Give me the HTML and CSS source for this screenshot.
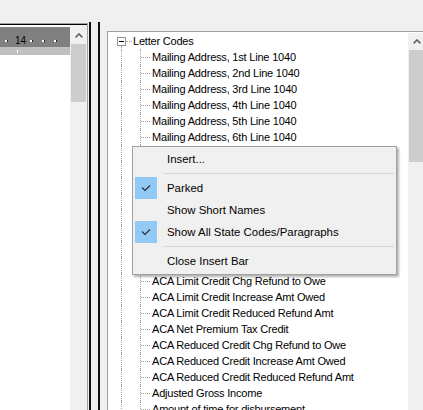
FILE: index.html
```html
<!DOCTYPE html>
<html>
<head>
<meta charset="utf-8">
<title>Letter Codes</title>
<link rel="stylesheet" href="styles.css">
</head>
<body>
<div class="app">
  <section class="left-frame">
    <div class="left-inner">
      <div class="doc">
        <div class="ruler">
          <span class="rdot"></span>
          <span class="ruler-num">14</span>
          <span class="rdot r2"></span>
          <span class="rdot r3"></span>
          <span class="rdot r3"></span>
        </div>
        <div class="ruler-band"><span class="band-tick"></span></div>
        <div class="page"></div>
      </div>
      <div class="vscroll vs-left">
        <div class="sb-btn"><svg width="8" height="5" viewBox="0 0 8 5"><polyline points="0.6,4.4 4,1 7.4,4.4" fill="none" stroke="#606060" stroke-width="1.6"/></svg></div>
        <div class="sb-thumb th-left"></div>
      </div>
    </div>
  </section>

  <div class="splitter"><span class="split-line"></span><span class="split-line"></span></div>

  <section class="right-pane">
    <div class="tree-box">
      <div class="tree">
        <div class="row root-row"><span class="exp"></span><span class="hstub"></span><span class="label root-label">Letter Codes</span></div>
        <div class="row"><span class="g1"></span><span class="g2"><span class="stub"></span></span><span class="label">Mailing Address, 1st Line 1040</span></div>
        <div class="row"><span class="g1"></span><span class="g2"><span class="stub"></span></span><span class="label">Mailing Address, 2nd Line 1040</span></div>
        <div class="row"><span class="g1"></span><span class="g2"><span class="stub"></span></span><span class="label">Mailing Address, 3rd Line 1040</span></div>
        <div class="row"><span class="g1"></span><span class="g2"><span class="stub"></span></span><span class="label">Mailing Address, 4th Line 1040</span></div>
        <div class="row"><span class="g1"></span><span class="g2"><span class="stub"></span></span><span class="label">Mailing Address, 5th Line 1040</span></div>
        <div class="row"><span class="g1"></span><span class="g2"><span class="stub"></span></span><span class="label">Mailing Address, 6th Line 1040</span></div>
        <div class="row"><span class="g1"></span><span class="g2"><span class="stub"></span></span><span class="label"></span></div>
        <div class="row"><span class="g1"></span><span class="g2"><span class="stub"></span></span><span class="label"></span></div>
        <div class="row"><span class="g1"></span><span class="g2"><span class="stub"></span></span><span class="label"></span></div>
        <div class="row"><span class="g1"></span><span class="g2"><span class="stub"></span></span><span class="label"></span></div>
        <div class="row"><span class="g1"></span><span class="g2"><span class="stub"></span></span><span class="label"></span></div>
        <div class="row"><span class="g1"></span><span class="g2"><span class="stub"></span></span><span class="label"></span></div>
        <div class="row"><span class="g1"></span><span class="g2"><span class="stub"></span></span><span class="label"></span></div>
        <div class="row"><span class="g1"></span><span class="g2"><span class="stub"></span></span><span class="label"></span></div>
        <div class="row"><span class="g1"></span><span class="g2"><span class="stub"></span></span><span class="label">ACA Limit Credit Chg Refund to Owe</span></div>
        <div class="row"><span class="g1"></span><span class="g2"><span class="stub"></span></span><span class="label">ACA Limit Credit Increase Amt Owed</span></div>
        <div class="row"><span class="g1"></span><span class="g2"><span class="stub"></span></span><span class="label">ACA Limit Credit Reduced Refund Amt</span></div>
        <div class="row"><span class="g1"></span><span class="g2"><span class="stub"></span></span><span class="label">ACA Net Premium Tax Credit</span></div>
        <div class="row"><span class="g1"></span><span class="g2"><span class="stub"></span></span><span class="label">ACA Reduced Credit Chg Refund to Owe</span></div>
        <div class="row"><span class="g1"></span><span class="g2"><span class="stub"></span></span><span class="label">ACA Reduced Credit Increase Amt Owed</span></div>
        <div class="row"><span class="g1"></span><span class="g2"><span class="stub"></span></span><span class="label">ACA Reduced Credit Reduced Refund Amt</span></div>
        <div class="row"><span class="g1"></span><span class="g2"><span class="stub"></span></span><span class="label">Adjusted Gross Income</span></div>
        <div class="row"><span class="g1"></span><span class="g2"><span class="stub"></span></span><span class="label">Amount of time for disbursement</span></div>
      </div>
      <div class="vscroll vs-right">
        <div class="sb-btn"><svg width="8" height="5" viewBox="0 0 8 5"><polyline points="0.6,4.4 4,1 7.4,4.4" fill="none" stroke="#606060" stroke-width="1.6"/></svg></div>
        <div class="sb-thumb th-right"></div>
      </div>
    </div>
  </section>

  <div class="menu">
    <div class="mi"><span class="check"></span><span class="mtext">Insert...</span></div>
    <div class="msep"></div>
    <div class="mi"><span class="check on"><svg width="22" height="22" viewBox="0 0 22 22"><polyline points="7,10.5 10,13.5 15,8.5" fill="none" stroke="#2b2b2b" stroke-width="1.1"/></svg></span><span class="mtext">Parked</span></div>
    <div class="mi"><span class="check"></span><span class="mtext">Show Short Names</span></div>
    <div class="mi"><span class="check on"><svg width="22" height="22" viewBox="0 0 22 22"><polyline points="7,10.5 10,13.5 15,8.5" fill="none" stroke="#2b2b2b" stroke-width="1.1"/></svg></span><span class="mtext">Show All State Codes/Paragraphs</span></div>
    <div class="msep"></div>
    <div class="mi"><span class="check"></span><span class="mtext">Close Insert Bar</span></div>
  </div>
</div>
</body>
</html>
```

FILE: styles.css
```css
* { box-sizing: border-box; margin: 0; padding: 0; }
html, body { width: 423px; height: 410px; overflow: hidden; }
body { background: #f0f0f0; font-family: "Liberation Sans", Arial, sans-serif; color: #000; }

.app { position: relative; display: flex; height: 410px; }

/* left document pane */
.left-frame { flex: none; width: 88px; margin-top: 23px; border-top: 1px solid #a0a0a0; border-right: 1px solid #a0a0a0; }
.left-inner { display: flex; height: 100%; border-top: 1px solid #000; }
.doc { width: 70px; background: #fff; padding-top: 2px; display: flex; flex-direction: column; }
.ruler { height: 20px; background: #808080; display: flex; align-items: center; padding: 8px 0 0 5px; }
.rdot { width: 2px; height: 2px; background: #fff; box-shadow: 1px 0 0 #202020; flex: none; }
.ruler-num { margin-left: 8px; font-size: 10px; line-height: 12px; color: #000; }
.rdot.r2 { margin-left: 4px; }
.rdot.r3 { margin-left: 10px; }
.ruler-band { height: 8px; background: #c0c0c0; padding: 3px 0 0 17px; }
.band-tick { display: block; width: 1px; height: 3px; background: #fff; }
.page { flex: 1; background: #fff; }

/* scrollbars */
.vscroll { flex: none; width: 17px; background: #f0f0f0; }
.vs-left { padding-top: 2px; }
.sb-btn { height: 17px; display: flex; align-items: center; justify-content: center; }
.sb-btn svg { display: block; }
.sb-thumb { margin: 0 1px; background: #cdcdcd; }
.th-left { height: 58px; }
.th-right { height: 112px; }

/* splitter */
.splitter { flex: none; width: 19px; margin-top: 22px; display: flex; gap: 7px; padding-left: 1px; }
.split-line { width: 2px; background: #111; }

/* right tree pane */
.right-pane { flex: none; width: 319px; padding-top: 31px; }
.tree-box { display: flex; height: 400px; background: #fff; border: 1px solid #a0a0a0; padding: 1px 0 0 1px; }
.tree { width: 299px; flex: none; padding-left: 12px; overflow: hidden; font-size: 11px; letter-spacing: -0.2px; }
.row { display: flex; height: 16px; white-space: nowrap; }
.label { line-height: 16px; }

.root-row { align-items: flex-start; }
.exp { position: relative; flex: none; width: 9px; height: 9px; margin: 4px 0 0 -4px; border: 1px solid #919191; background: #fff; }
.exp::before { content: ""; position: absolute; left: 1px; top: 3px; width: 5px; height: 1px; background: #000; }
.exp::after { content: ""; position: absolute; left: 3px; top: 8px; height: 4px; border-left: 1px dotted #a0a0a0; }
.hstub { flex: none; width: 6px; margin-top: 8px; border-top: 1px dotted #a0a0a0; }
.root-label { margin-left: 1px; }

.g1 { flex: none; width: 19px; border-left: 1px dotted #a0a0a0; }
.g2 { flex: none; width: 12px; border-left: 1px dotted #a0a0a0; display: flex; align-items: flex-start; }
.stub { width: 9px; margin-top: 8px; border-top: 1px dotted #a0a0a0; }

/* context menu */
.menu { position: absolute; left: 132px; top: 146px; width: 265px; padding: 1px 0 2px; background: #f0f0f0; border: 1px solid #a0a0a0; box-shadow: 2px 2px 2px rgba(0, 0, 0, 0.3); font-size: 11.4px; }
.mi { display: flex; align-items: center; height: 22px; padding-left: 2px; }
.check { flex: none; width: 22px; height: 22px; margin-right: 10px; }
.check.on { background: #91c9f7; }
.check svg { display: block; }
.mtext { line-height: 22px; white-space: nowrap; }
.msep { height: 1px; margin: 3px 2px 3px 30px; background: #d7d7d7; }
```
